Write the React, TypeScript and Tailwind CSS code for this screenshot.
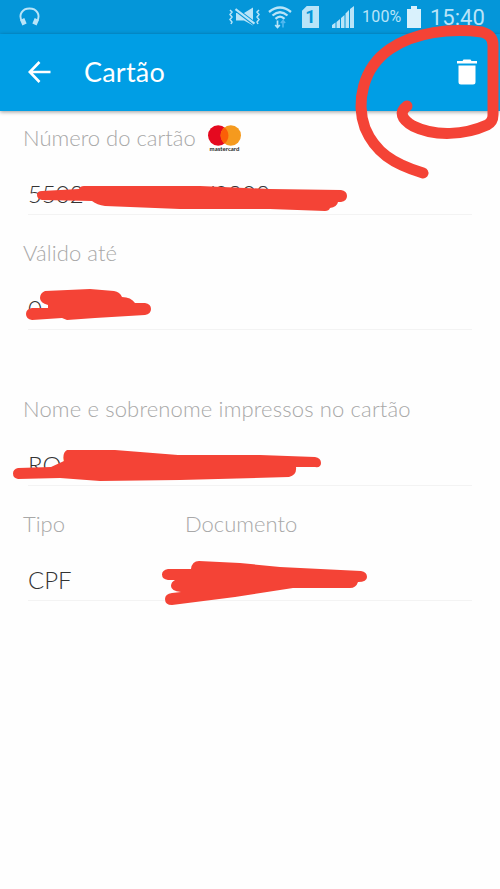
import type { ReactNode } from "react";
import clsx from "clsx";

function StatusBar() {
  return (
    <div className="flex h-[34px] items-center bg-[#0496d9] pl-[19px] text-[#b9e4f8]">
      <svg width="21" height="20" viewBox="0 0 21 20" fill="none" stroke="currentColor">
        <path d="M3 14.500C-1 7.500 3.500 1.500 10.500 1.500S22 7.500 18 14.500" strokeWidth="1.900" />
        <path d="M3.200 12l2.300 5.500M17.800 12l-2.300 5.500" strokeWidth="4.600" />
      </svg>

      <svg className="ml-[188px]" width="34" height="20" viewBox="0 0 34 20" fill="none" stroke="currentColor">
        <path d="M2 3l2 2-2 2.500 2 2.500-2 2.500 2 2.500-1 2M31 3l-2 2 2 2.500-2 2.500 2 2.500-2 2.500 1 2" strokeWidth="1.500" />
        <path d="M8 6h8l9-5.500v18l-9-5H8z" fill="currentColor" stroke="none" />
        <path d="M6 1.200l21 16" stroke="#0496d9" strokeWidth="4.200" />
        <path d="M7.500 2.200l19 14.500" strokeWidth="2.200" />
      </svg>

      <svg className="ml-[6px]" width="24" height="24" viewBox="0 0 24 24" fill="none" stroke="currentColor">
        <path d="M1 7Q12-2 23 7M4.500 10.500Q12 4 19.500 10.500M7.500 13.800Q12 9.500 16.500 13.800" strokeWidth="2.300" />
        <path d="M9.500 15.500v7M7.200 20l2.300 2.500 2.300-2.500" strokeWidth="1.700" />
        <path d="M15 22.500v-7M12.900 18l2.100-2.500 2.100 2.500" stroke="#52b8ef" strokeWidth="1.600" />
      </svg>

      <span className="ml-[10px] flex h-[22px] w-[17px] items-center justify-center bg-[#b9e4f8] font-['Roboto',sans-serif] text-[18px] leading-none font-bold text-[#0496d9] [clip-path:polygon(28%_0,100%_0,100%_100%,0_100%,0_22%)]">
        1
      </span>

      <svg className="ml-[13px]" width="22" height="22" viewBox="0 0 22 22" fill="currentColor">
        <path d="M0 19l3.500-2.500V22H0zM4.500 16L8 13v9H4.500zM9 12l3.500-3v13H9zM13.500 7.500L17 4v18h-3.500zM18 3l4-3v22h-4z" />
      </svg>

      <span className="ml-[8px] w-[40px] font-['Roboto',sans-serif] text-[16px] tracking-[0.2px] whitespace-nowrap">
        100%
      </span>
      <svg className="ml-[5px]" width="14" height="22" viewBox="0 0 14 22" fill="#d9f1fc">
        <path d="M4 0h6v3h4v19H0V3h4z" />
      </svg>
      <span className="ml-[9px] font-['Roboto',sans-serif] text-[22px]">15:40</span>
    </div>
  );
}

function AppBar() {
  return (
    <header className="relative flex h-[77px] items-center bg-[#009ee5] pr-[23px] pl-[28px] text-white shadow-[0_1px_4px_rgba(0,0,0,0.4)]">
      <svg className="-mt-[1px]" width="23" height="22" viewBox="0 0 23 22" fill="none" stroke="currentColor" strokeWidth="2.600">
        <path d="M11.500 1L1.800 11l9.700 10M2 11h20.500" />
      </svg>
      <h1 className="ml-[33px] font-['Lato',sans-serif] text-[27px] tracking-[0.2px]">
        Cartão
      </h1>
      <svg className="-mt-[2px] ml-auto" width="20" height="26" viewBox="0 0 20 26" fill="currentColor">
        <path d="M0 2h5.500L6.500.5h7l1 1.500H20v2.500H0zM1.500 6.500h17V23q0 2.500-2.500 2.500H4Q1.500 25.500 1.500 23z" />
      </svg>
    </header>
  );
}

function MastercardLogo() {
  return (
    <span className="flex w-[33px] flex-col items-center">
      <svg width="33" height="21" viewBox="0 0 34 21">
        <circle cx="10.500" cy="10.500" r="10.500" fill="#e5091f" />
        <circle cx="23.500" cy="10.500" r="10.500" fill="#f59a1e" />
        <path d="M17 2.200a10.500 10.500 0 0 1 0 16.600a10.500 10.500 0 0 1 0-16.600z" fill="#fb5f07" />
      </svg>
      <span className="font-['Lato',sans-serif] text-[6px] leading-[6px] font-bold text-[#222]">
        mastercard
      </span>
    </span>
  );
}

function Label({ children, className }: { children: ReactNode; className?: string }) {
  return (
    <span className={clsx("font-['Lato',sans-serif] text-[22px] leading-6 font-light whitespace-nowrap text-[#a8a8a8]", className)}>
      {children}
    </span>
  );
}

function Field({ label, value, className }: { label: ReactNode; value: ReactNode; className?: string }) {
  return (
    <div className={clsx("flex flex-col justify-end", className)}>
      <div className="flex h-6 items-center">{label}</div>
      <div className="mt-[30px] ml-[5px] flex h-[35px] border-b border-[#f3f3f3] pb-[6px] font-['Lato',sans-serif] text-[24px] leading-7 font-light text-[#333]">
        {value}
      </div>
    </div>
  );
}

// hand drawn marker strokes on top of the screen
function Scribbles() {
  return (
    <svg className="pointer-events-none absolute inset-0" width="500" height="889" viewBox="0 0 500 889" fill="#f44336">
      <path
        d="M407 106C399 112 401 119 413 126C435 137 465 135 487 125Q493 122 493 115V45Q493 35 482 32C450 28 415 32 390 49C362 68 356 103 365 128C375 152 393 164 423 173"
        fill="none"
        stroke="#f44336"
        strokeWidth="11"
        strokeLinecap="round"
        strokeLinejoin="round"
      />
      <path d="M42 191L79 189Q80 186 84 186L200 186L270 189L341 190Q347 191 347 196T341 202H338Q337 207 330 208Q329 211 325 211L270 209L180 209L105 206Q97 205 92 201L42 200Q37 199 37 195T42 191Z" />
      <path d="M45 291L90 289L114 291Q120 292 122 297Q131 297 135 303L145 303Q151 304 151 309T145 315L95 318L67 320L62 318L32 320Q26 319 26 314T32 308H48V305Q40 303 40 298Q40 293 45 291Z" />
      <path d="M18 468L51 467L64 461Q62 453 67 450L115 450L178 455L260 455L315 457Q321 458 321 463T315 467H296Q297 475 289 477L180 480L100 481L60 478L18 479Q13 478 13 473.500T18 468Z" />
      <path d="M168 569L191 569Q192 561 199 561L240 563L280 567L361 571Q367 572 367 577T358 582Q356 588 350 588L293 588L235 597L172 605Q165 605 165 599Q165 594 172 593L181 592Q171 591 171 586Q171 582 175 580H168Q162 579 162 574.500T168 569Z" />
    </svg>
  );
}

export default function App() {
  return (
    <div className="relative h-[889px] w-[500px] overflow-hidden bg-[#fefefe]">
      <StatusBar />
      <AppBar />
      <main className="flex flex-col pr-[28px] pl-[23px]">
        <Field
          className="h-[104px]"
          label={
            <>
              <Label className="w-[185px]">Número do cartão</Label>
              <MastercardLogo />
            </>
          }
          value={
            <>
              <span>5502</span>
              <span className="ml-[99px]">VV0202</span>
            </>
          }
        />
        <Field className="h-[115px]" label={<Label className="tracking-[0.1px]">Válido até</Label>} value="0" />
        <Field
          className="h-[156px]"
          label={<Label className="tracking-[0.15px]">Nome e sobrenome impressos no cartão</Label>}
          value="ROI"
        />
        <Field
          className="h-[115px]"
          label={
            <>
              <Label className="w-[162px]">Tipo</Label>
              <Label>Documento</Label>
            </>
          }
          value="CPF"
        />
      </main>
      <Scribbles />
    </div>
  );
}
